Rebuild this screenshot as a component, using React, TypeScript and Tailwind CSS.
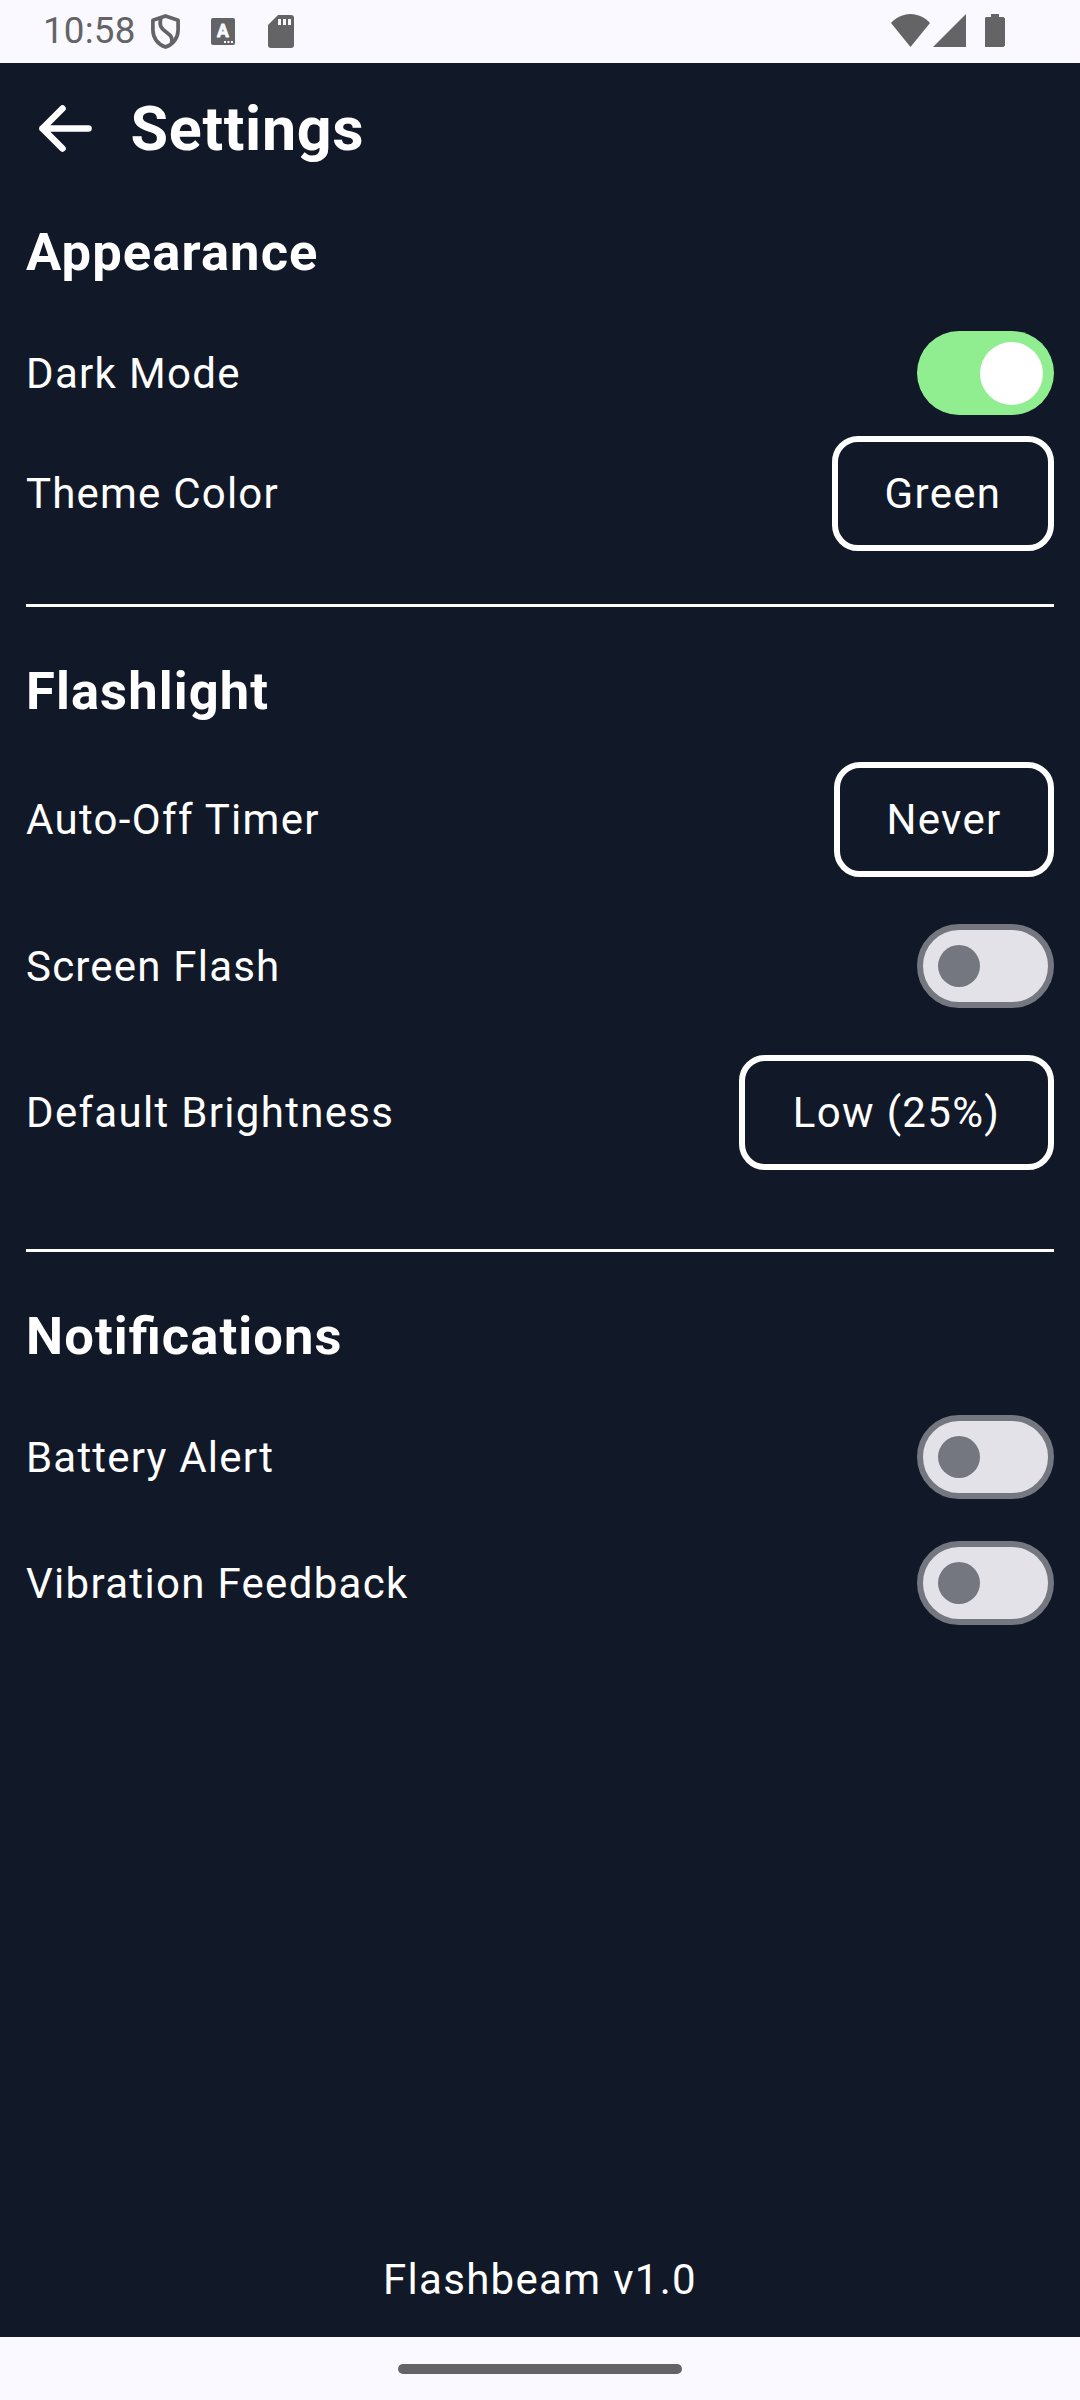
import React from "react";

function Toggle({ on = false }: { on?: boolean }) {
  return on ? (
    <button role="switch" aria-checked="true" className="flex h-[84px] w-[137px] items-center justify-end rounded-full bg-[#90ee90] pr-[11px]">
      <span className="size-[63px] rounded-full bg-white" />
    </button>
  ) : (
    <button role="switch" aria-checked="false" className="flex h-[84px] w-[137px] items-center rounded-full border-6 border-[#74777f] bg-[#e3e2e9] pl-[15px]">
      <span className="size-[42px] rounded-full bg-[#74777f]" />
    </button>
  );
}

function Choice({ className, children }: { className: string; children: React.ReactNode }) {
  return (
    <button className={`h-[115px] rounded-[26px] border-6 border-white text-center tracking-[1.3125px] whitespace-nowrap ${className}`}>
      {children}
    </button>
  );
}

function Row({ label, className, labelClass = "", children }: { label: string; className: string; labelClass?: string; children: React.ReactNode }) {
  return (
    <div className={`flex items-center justify-between ${className}`}>
      <span className={labelClass}>{label}</span>
      {children}
    </div>
  );
}

function Heading({ children }: { children: React.ReactNode }) {
  return <h2 className="flex h-[115px] items-center text-[52.5px] font-bold tracking-[1.1px] [font-feature-settings:'liga'_1]">{children}</h2>;
}

function StatusBar() {
  return (
    <div className="flex h-[63px] items-start bg-[#f9f9ff] text-[#646466]">
      <span className="ml-[43px] w-[108px] pt-[9px] text-[36.75px] leading-[44px] tracking-[0.2px]">10:58</span>
      <svg className="mt-[14px] h-[35px] w-[29px]" viewBox="0 0 29 35" fill="none" stroke="currentColor" strokeWidth="3.7">
        <path d="M14.5 1.900 27.1 6.300V16C27.1 24 22 30.500 14.5 33.1 7 30.500 1.900 24 1.900 16V6.300Z" strokeLinejoin="round" />
        <path d="M10 3.500C7.800 11.500 10 14 14.500 17.500 20 21.500 22 23.500 20.500 29.500" />
      </svg>
      <svg className="mt-[18px] ml-[31px] h-[27px] w-[24px]" viewBox="0 0 24 27">
        <rect width="24" height="27" rx="2" fill="currentColor" />
        <text x="12" y="19.3" textAnchor="middle" fontSize="17.5" fontWeight="700" fill="#f9f9ff" stroke="#f9f9ff" strokeWidth="0.8" strokeLinejoin="round" letterSpacing="0">A</text>
        <path d="M13 23h2v2h-2zM16.5 23h2v2h-2zM20 23h2v2h-2z" fill="#f9f9ff" />
      </svg>
      <svg className="mt-[15px] ml-[33px] h-[33px] w-[26px]" viewBox="0 0 26 33">
        <path d="M10 0H23a3 3 0 0 1 3 3V30a3 3 0 0 1-3 3H3a3 3 0 0 1-3-3V10Z" fill="currentColor" />
        <path d="M10 4h3v6h-3zM15 4h3v6h-3zM20 4h3v6h-3z" fill="#f9f9ff" />
      </svg>
      <svg className="mt-[14px] ml-auto h-[33px] w-[39px]" viewBox="0 0 39 33">
        <path d="M0 9C5 3.500 12 0 19.500 0S34 3.500 39 9L19.500 33Z" fill="currentColor" />
      </svg>
      <svg className="mt-[14px] ml-[3px] h-[33px] w-[33px]" viewBox="0 0 33 33">
        <path d="M33 0V33H0Z" fill="currentColor" />
      </svg>
      <svg className="mt-[14px] mr-[75px] ml-[19px] h-[33px] w-[20px]" viewBox="0 0 20 33">
        <path d="M6 0h8v3h4.500L20 4.500V31.500L18.500 33H0V4L1 3H6Z" fill="currentColor" />
      </svg>
    </div>
  );
}

export default function App() {
  return (
    <div className="flex h-[2400px] w-[1080px] flex-col bg-[#111827] font-[Roboto,sans-serif] text-[42px] leading-none tracking-[1.3125px] text-white">
      <StatusBar />
      <header className="flex h-[132px] items-center pl-[39px]">
        <svg className="mb-[2px] h-[47px] w-[53px]" viewBox="0 0 53 47" fill="none" stroke="white" strokeWidth="6.6" strokeLinecap="round" strokeLinejoin="round">
          <path d="M49.500 23.500H3.500M23.500 3.500 3.500 23.500 23.500 43.500" />
        </svg>
        <h1 className="ml-[38.500px] text-[61px] font-bold tracking-[0.7px]">Settings</h1>
      </header>
      <main className="flex flex-1 flex-col px-[26px]">
        <section>
          <Heading>Appearance</Heading>
          <Row label="Dark Mode" className="h-[126px]" labelClass="pt-[2px]"><Toggle on /></Row>
          <Row label="Theme Color" className="h-[115px]" labelClass="tracking-[1.2px]"><Choice className="w-[222px]">Green</Choice></Row>
        </section>
        <hr className="mt-[53px] mb-[27px] border-t-3 border-white" />
        <section>
          <Heading>Flashlight</Heading>
          <Row label="Auto-Off Timer" className="mt-[13px] h-[115px]"><Choice className="w-[220px]">Never</Choice></Row>
          <Row label="Screen Flash" className="my-[26px] h-[126px]" labelClass="pt-[2px] tracking-[1.2px]"><Toggle /></Row>
          <Row label="Default Brightness" className="h-[115px]"><Choice className="w-[315px]">Low (25%)</Choice></Row>
        </section>
        <hr className="mt-[79px] mb-[27px] border-t-3 border-white" />
        <section>
          <Heading>Notifications</Heading>
          <Row label="Battery Alert" className="h-[126px]" labelClass="pt-[2px] tracking-[1.2px]"><Toggle /></Row>
          <Row label="Vibration Feedback" className="h-[126px]" labelClass="pt-[2px]"><Toggle /></Row>
        </section>
        <footer className="mt-auto flex h-[115px] items-center justify-center">Flashbeam v1.0</footer>
      </main>
      <div className="flex h-[63px] justify-center bg-[#f9f9ff] pt-[27px]">
        <div className="h-[10px] w-[284px] rounded-full bg-[#646466]" />
      </div>
    </div>
  );
}
